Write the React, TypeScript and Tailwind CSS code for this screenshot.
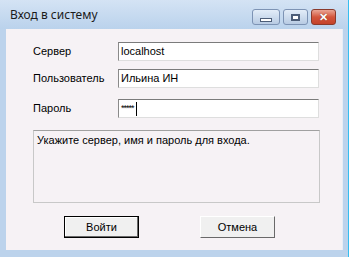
import { useState } from "react";

function Field({ label, value, password }: { label: string; value: string; password?: boolean }) {
  return (
    <div className="flex items-center">
      <span className="w-[85px] pl-[27px] box-content">{label}</span>
      <div className="relative flex h-[19px] w-[201px] items-center border border-[#dedede] border-t-[#7b7b7b] border-l-[#8a8a8a] bg-white pl-[2px]">
        {password ? (
          <span className="flex items-center">
            <span className="text-[9px] leading-none tracking-[-1px]">*****</span>
            <span className="ml-[2px] h-[14px] w-px bg-black" />
          </span>
        ) : (
          <span>{value}</span>
        )}
      </div>
    </div>
  );
}

function CaptionButtons() {
  return (
    <div className="flex items-start gap-[3px] pt-[9px]">
      <div className="flex h-[16px] w-[28px] items-center justify-center rounded-[3px] border border-[#7d93b4] bg-gradient-to-b from-[#e3edf8] to-[#b8cbe3]">
        <span className="mt-[5px] h-[4px] w-[12px] border border-[#4c5d78] bg-white" />
      </div>
      <div className="flex h-[16px] w-[25px] items-center justify-center rounded-[3px] border border-[#7d93b4] bg-gradient-to-b from-[#e3edf8] to-[#b8cbe3]">
        <span className="h-[7px] w-[9px] border-2 border-[#4c5d78] bg-white" />
      </div>
      <div className="flex h-[16px] w-[25px] items-center justify-center rounded-[3px] border border-[#8a3a2c] bg-gradient-to-b from-[#e9a595] via-[#d3553c] to-[#c4422a] text-[11px] font-bold leading-none text-white [text-shadow:0_0_1px_#5a1a10]">
        ✕
      </div>
    </div>
  );
}

export default function App() {
  const [focus] = useState("password");

  return (
    <div
      className="flex h-[257px] w-[349px] flex-col border-r border-[#35bdf0] bg-[#bcd3ec] text-[11px] text-black"
      style={{ fontFamily: '"Liberation Sans", Arial, sans-serif' }}
      data-focus={focus}
    >
      <div className="flex h-[29px] items-start justify-between bg-gradient-to-b from-[#d4e3f4] to-[#bad2ec] pl-[10px] pr-[12px]">
        <span className="pt-[6px] text-[12px] text-[#1b1b1b]" style={{ fontFamily: '"Noto Sans", sans-serif' }}>
          Вход в систему
        </span>
        <CaptionButtons />
      </div>

      <div className="ml-[6px] mr-[5px] flex h-[221px] flex-col border-r-[1px] border-[#e7eef7] bg-[#f6f2f5]">
        <div className="flex flex-col gap-[8px] pt-[13px]">
          <Field label="Сервер" value="localhost" />
          <Field label="Пользователь" value="Ильина ИН" />
          <div className="mt-[3px]">
            <Field label="Пароль" value="" password />
          </div>
        </div>

        <div className="ml-[27px] mt-[12px] h-[73px] w-[287px] border border-[#c8c8c8] border-t-[#a0a0a0] bg-[#f6f2f5] px-[3px] pt-[1px]">
          Укажите сервер, имя и пароль для входа.
        </div>

        <div className="mt-[13px] flex gap-[61px] pl-[58px]">
          <button className="h-[22px] w-[75px] border border-black bg-[#f0f0f0] shadow-[inset_-1px_-1px_0_#696969,inset_1px_1px_0_#ffffff]">
            Войти
          </button>
          <button className="h-[22px] w-[75px] border border-[#f0f0f0] border-b-[#696969] border-r-[#696969] border-t-white border-l-white bg-[#f0f0f0]">
            Отмена
          </button>
        </div>
      </div>
      <div className="flex-1" />
    </div>
  );
}
